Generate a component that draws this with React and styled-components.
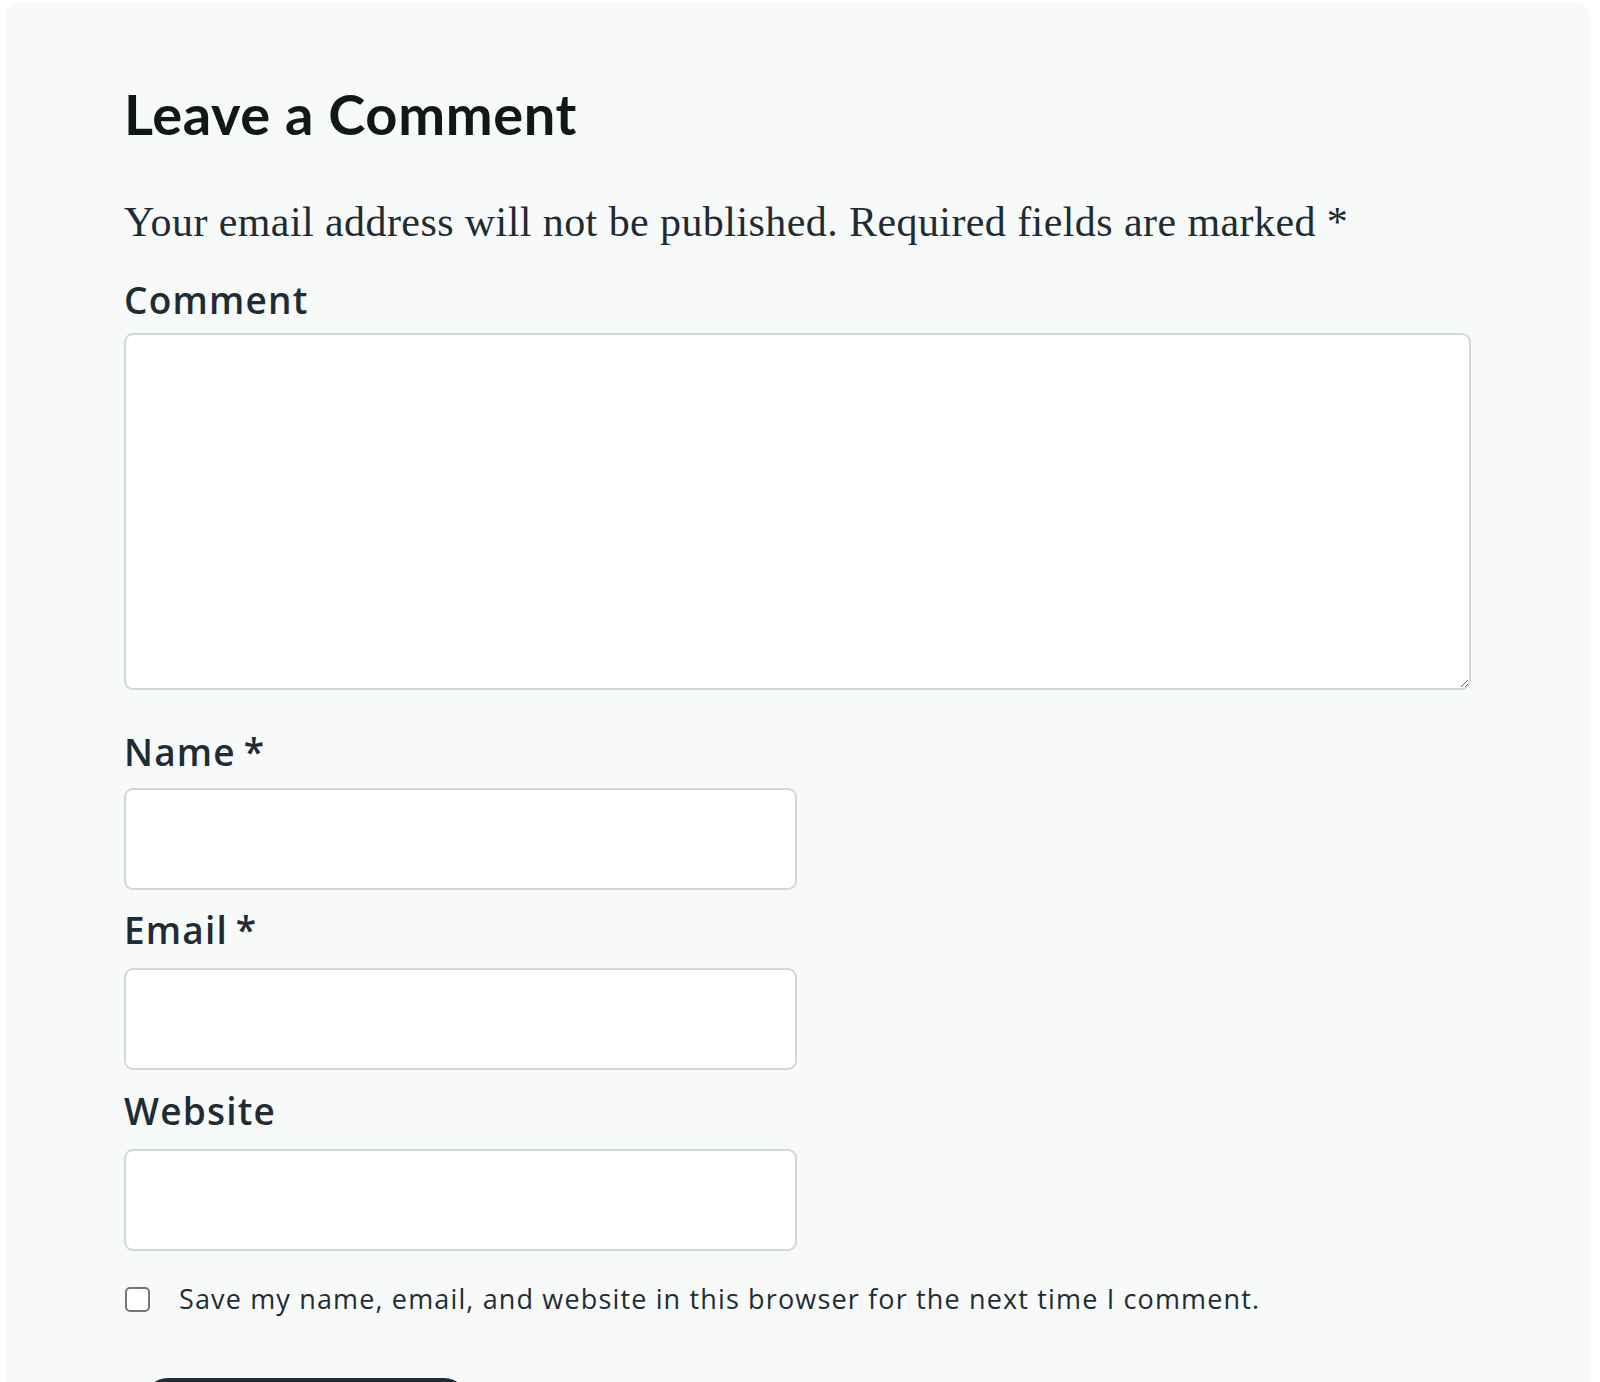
import React from "react";
import styled, { createGlobalStyle } from "styled-components";

const Global = createGlobalStyle`
  html, body { margin: 0; padding: 0; background: #ffffff; }
  body { font-family: "Lato", "Liberation Sans", sans-serif; }
  * { box-sizing: border-box; }
`;

const Card = styled.section`
  margin: 2px 11px 0 6px;
  background: #f8fafa;
  border-radius: 12px 12px 0 0;
  padding: 78px 130px 0 118px;
  min-height: 1380px;
`;

const Heading = styled.h2`
  margin: 0 0 50px;
  font-family: "Lato", "Liberation Sans", sans-serif;
  font-weight: 700;
  font-size: 56px;
  line-height: 67px;
  letter-spacing: 0.6px;
  color: #121719;
`;

const Notice = styled.p`
  margin: 0 0 30px;
  font-family: "Liberation Serif", "DejaVu Serif", serif;
  font-size: 42px;
  line-height: 50px;
  letter-spacing: 0.42px;
  color: #1f2c33;
`;

const Form = styled.form`
  display: flex;
  flex-direction: column;
`;

const Field = styled.div`
  display: flex;
  flex-direction: column;
  margin-bottom: ${(p) => p.$after}px;
`;

const Label = styled.label`
  font-family: "Open Sans", "Lato", sans-serif;
  font-weight: 600;
  font-size: 37px;
  line-height: 46px;
  letter-spacing: 1.2px;
  word-spacing: -3px;
  color: #1f2c33;
  margin-bottom: ${(p) => p.$gap}px;
`;

const TextArea = styled.textarea`
  width: 1347px;
  height: 357px;
  background: #ffffff;
  border: 2px solid #cfd8dc;
  border-radius: 9px;
  font-family: "Open Sans", sans-serif;
  font-size: 24px;
  padding: 12px;
  resize: both;
  outline: none;
`;

const Input = styled.input`
  width: 673px;
  height: 102px;
  background: #ffffff;
  border: 2px solid #cfd8dc;
  border-radius: 9px;
  font-family: "Open Sans", sans-serif;
  font-size: 24px;
  padding: 0 16px;
  outline: none;
`;

const CheckRow = styled.div`
  display: flex;
  align-items: center;
  gap: 29px;
  margin-top: 31px;
  padding-left: 1px;
`;

const Check = styled.input`
  appearance: none;
  margin: 0;
  width: 25px;
  height: 25px;
  border: 2px solid #767676;
  border-radius: 5px;
  background: #ffffff;
  flex: none;
`;

const CheckText = styled.label`
  font-family: "Open Sans", "Lato", sans-serif;
  font-size: 27px;
  line-height: 34px;
  letter-spacing: 1.15px;
  color: #1f2c33;
`;

const Submit = styled.button`
  margin-top: 62px;
  margin-left: 20px;
  width: 324px;
  height: 70px;
  border: none;
  border-radius: 24px;
  background: #1f2d33;
  color: #ffffff;
  font-family: "Open Sans", sans-serif;
  font-weight: 700;
  font-size: 26px;
  align-self: flex-start;
`;

export default function App() {
  return (
    <>
      <Global />
      <Card>
        <Heading>Leave a Comment</Heading>
        <Notice>
          Your email address will not be published. Required fields are marked *
        </Notice>
        <Form onSubmit={(e) => e.preventDefault()}>
          <Field $after={39}>
            <Label htmlFor="comment" $gap={10}>Comment</Label>
            <TextArea id="comment" />
          </Field>
          <Field $after={17}>
            <Label htmlFor="author" $gap={13}>Name *</Label>
            <Input id="author" type="text" />
          </Field>
          <Field $after={18}>
            <Label htmlFor="email" $gap={15}>Email *</Label>
            <Input id="email" type="email" />
          </Field>
          <Field $after={0}>
            <Label htmlFor="url" $gap={15}>Website</Label>
            <Input id="url" type="url" />
          </Field>
          <CheckRow>
            <Check id="cookies" type="checkbox" />
            <CheckText htmlFor="cookies">
              Save my name, email, and website in this browser for the next time I comment.
            </CheckText>
          </CheckRow>
          <Submit type="submit">Post Comment</Submit>
        </Form>
      </Card>
    </>
  );
}
